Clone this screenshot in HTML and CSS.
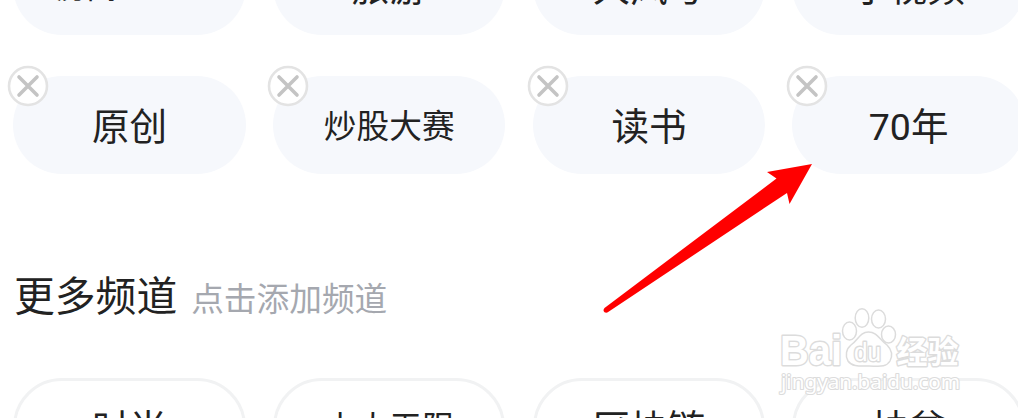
FILE: index.html
```
<!DOCTYPE html>
<html lang="zh-CN">
<head>
    <meta charset="UTF-8">
    <meta name="viewport" content="width=device-width, initial-scale=1.0">
    <title>频道管理</title>
    <link rel="stylesheet" href="styles.css">
</head>
<body>
    <!-- shared close icon -->
    <svg class="defs" width="0" height="0">
        <symbol id="close" viewBox="0 0 42 42">
            <circle cx="21" cy="21" r="19" fill="#fff" stroke="#e3e3e3" stroke-width="2.6"/>
            <path d="M12 12L30 30M30 12L12 30" stroke="#c4c4c4" stroke-width="3.6" stroke-linecap="round"/>
        </symbol>
    </svg>

    <div class="page">
        <!-- My channels -->
        <div class="channels mine">
            <div class="channel long">房间</div>
            <div class="channel">旅游</div>
            <div class="channel">大风号</div>
            <div class="channel">小视频</div>
            <div class="channel">原创<svg class="close"><use href="#close"/></svg></div>
            <div class="channel small">炒股大赛<svg class="close"><use href="#close"/></svg></div>
            <div class="channel">读书<svg class="close"><use href="#close"/></svg></div>
            <div class="channel">70年<svg class="close"><use href="#close"/></svg></div>
        </div>

        <!-- More channels -->
        <div class="heading">
            <h2>更多频道</h2>
            <span>点击添加频道</span>
        </div>
        <div class="channels more">
            <div class="channel">时尚</div>
            <div class="channel small">十大无限</div>
            <div class="channel">区块链</div>
            <div class="channel">扶贫</div>
        </div>

        <!-- Pointer arrow -->
        <svg class="arrow" width="220" height="160" viewBox="600 160 220 160">
            <path d="M812 164L767 172L776.500 178.500L604.500 308Q602.500 310.500 604.500 312.300Q606.500 313.500 608.500 311.700L787 193L789.500 204Z" fill="#f00"/>
        </svg>

        <!-- Watermark -->
        <svg class="watermark" width="200" height="100" viewBox="770 300 200 100">
            <g class="mark">
                <text class="bai" x="780" y="364.500" textLength="62" lengthAdjust="spacingAndGlyphs">Bai</text>
                <ellipse cx="849.500" cy="331" rx="7" ry="9"/>
                <ellipse cx="862" cy="318" rx="6.800" ry="9.300"/>
                <ellipse cx="878.500" cy="319" rx="7" ry="9"/>
                <ellipse cx="888.500" cy="334.500" rx="7" ry="8.500"/>
                <path d="M868.500 332C860 332 858 340 851 345C846 349 845 356 848 361C852 367 860 366 869 366C878 366 886 368 890 361C893 355 892 350 887 345C880 340 877 332 868.500 332Z"/>
                <text class="du" x="854" y="360.500" textLength="27" lengthAdjust="spacingAndGlyphs">du</text>
                <text class="jy" x="896.500" y="362.500">经验</text>
                <text class="url" x="781" y="388.500" textLength="179" lengthAdjust="spacingAndGlyphs">jingyan.baidu.com</text>
            </g>
        </svg>
    </div>
</body>
</html>
```

FILE: styles.css
```
body {
    margin: 0;
    background-color: #fff;
    color: #222;
    font-family: Roboto, "Noto Sans CJK SC", sans-serif;
}
.defs {
    display: block;
}
.page {
    position: relative;
    width: 1018px;
    height: 418px;
    overflow: hidden;
}
.channels {
    display: grid;
    grid-template-columns: repeat(4, 232.5px);
    gap: 41px 27.2px;
    margin-left: 13.3px;
}
.mine {
    margin-top: -63px;
}
.channel {
    position: relative;
    display: flex;
    align-items: center;
    justify-content: center;
    box-sizing: border-box;
    height: 98px;
    padding-top: 3px;
    border-radius: 49px;
    background-color: #f6f8fc;
    font-size: 37.5px;
    line-height: 54px;
    white-space: nowrap;
}
.small {
    font-size: 32.7px;
}
.long {
    justify-content: flex-start;
    padding-top: 4px;
    padding-left: 43.5px;
    font-size: 30px;
}
.close {
    position: absolute;
    left: -6px;
    top: -11px;
    width: 42px;
    height: 42px;
}
.heading {
    display: flex;
    align-items: baseline;
    height: 60px;
    margin: 93px 0 51px 14px;
}
.heading h2 {
    margin: 0;
    font-size: 40.8px;
    line-height: 60px;
    font-weight: 400;
}
.heading span {
    margin-left: 14px;
    color: #a5a8af;
    font-size: 32.7px;
}
.more .channel {
    border: 3px solid #f1f2f3;
    background-color: #fff;
}
.arrow {
    position: absolute;
    left: 600px;
    top: 160px;
}
.watermark {
    position: absolute;
    left: 770px;
    top: 300px;
}
.mark {
    fill: #fff;
    stroke: #dcdcdc;
    stroke-width: 1.5px;
}
.mark text {
    paint-order: stroke;
    stroke-width: 2.8px;
    stroke-linejoin: round;
}
.bai {
    font: bold 42px "Liberation Sans", sans-serif;
}
.du {
    font: 25px "Liberation Sans", sans-serif;
}
.jy {
    font: bold 31px "Noto Sans CJK SC", sans-serif;
}
.mark .url {
    font: 20px "Noto Sans", sans-serif;
    stroke-width: 2.2px;
}
```
